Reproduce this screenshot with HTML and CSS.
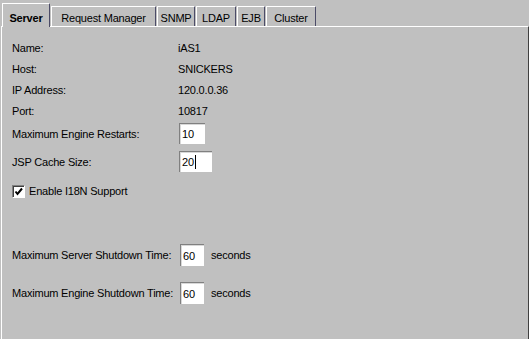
FILE: index.html
```html
<!DOCTYPE html>
<html lang="en">
<head>
    <meta charset="UTF-8">
    <title>Server Properties</title>
    <link rel="stylesheet" href="styles.css">
</head>
<body>
    <div class="frame">
        <div class="tab-strip">
            <div class="tab selected">Server</div>
            <div class="tab">Request Manager</div>
            <div class="tab">SNMP</div>
            <div class="tab">LDAP</div>
            <div class="tab">EJB</div>
            <div class="tab">Cluster</div>
        </div>

        <div class="tab-panel">
            <div class="info-grid">
                <div class="label">Name:</div>
                <div class="value">iAS1</div>
                <div class="label">Host:</div>
                <div class="value">SNICKERS</div>
                <div class="label">IP Address:</div>
                <div class="value">120.0.0.36</div>
                <div class="label">Port:</div>
                <div class="value">10817</div>
            </div>

            <div class="engine-grid">
                <div class="label">Maximum Engine Restarts:</div>
                <div class="field field-restarts">10</div>
                <div class="label">JSP Cache Size:</div>
                <div class="field field-cache">20<span class="caret"></span></div>
            </div>

            <div class="check-row">
                <span class="checkbox">
                    <svg width="9" height="9" viewBox="0 0 9 9">
                        <path d="M1.5 4.5 L3.5 7 L8 1.5" fill="none" stroke="#000" stroke-width="2"/>
                    </svg>
                </span>
                <span class="label">Enable I18N Support</span>
            </div>

            <div class="shutdown-grid">
                <div class="label">Maximum Server Shutdown Time:</div>
                <div class="field field-time">60</div>
                <div class="unit">seconds</div>
                <div class="label">Maximum Engine Shutdown Time:</div>
                <div class="field field-time">60</div>
                <div class="unit">seconds</div>
            </div>
        </div>
    </div>
</body>
</html>
```

FILE: styles.css
```css
/* Base */
* {
    margin: 0;
    padding: 0;
    box-sizing: border-box;
}

body {
    font-family: 'Liberation Sans', Arial, sans-serif;
    font-size: 11px;
    letter-spacing: -0.2px;
    color: #000;
    background: #c0c0c0;
    height: 100vh;
    overflow: hidden;
}

.frame {
    display: flex;
    flex-direction: column;
    height: 100%;
    padding-left: 1px;
}

/* Tabs */
.tab-strip {
    display: flex;
    align-items: flex-end;
    gap: 1px;
    height: 26px;
    padding-left: 1px;
}

.tab {
    line-height: 14px;
    text-align: center;
    white-space: nowrap;
    padding: 4px 0 1px 0;
    border-top: 1px solid #fff;
    border-left: 1px solid #fff;
    border-right: 1px solid #4c4c68;
    border-radius: 1px 1px 0 0;
}

/* tab widths follow the label lengths */
.tab:nth-child(1) { width: 48px; }
.tab:nth-child(2) { width: 105px; }
.tab:nth-child(3) { width: 38px; }
.tab:nth-child(4) { width: 40px; }
.tab:nth-child(5) { width: 28px; }
.tab:nth-child(6) { width: 50px; }

.tab.selected {
    position: relative;
    font-weight: 700;
    padding: 7px 0 2px 0;
    margin-bottom: -1px;
    background: #c0c0c0;
}

/* Panel */
.tab-panel {
    flex-grow: 1;
    border-top: 1px solid #fff;
    border-left: 1px solid #fff;
    border-right: 1px solid #404040;
    padding: 10px 0 0 10px;
}

.label,
.value,
.unit {
    line-height: 14px;
    white-space: nowrap;
}

.info-grid {
    display: grid;
    grid-template-columns: 166px auto;
    grid-auto-rows: 21px;
    align-items: center;
}

.engine-grid {
    display: grid;
    grid-template-columns: 167px auto;
    row-gap: 7px;
    align-items: center;
    justify-items: start;
    margin-top: 2px;
}

/* Text fields */
.field {
    display: flex;
    align-items: center;
    height: 21px;
    padding-left: 2px;
    color: #000;
    background: #fff;
    border-top: 1px solid #808080;
    border-left: 1px solid #808080;
    box-shadow: inset 1px 1px 0 #d8d8d8;
    line-height: 14px;
}

.field-restarts { width: 26px; }
.field-cache { width: 33px; }
.field-time { width: 24px; height: 22px; }

.caret {
    width: 1px;
    height: 14px;
    margin-left: 1px;
    background: #000;
}

/* Checkbox */
.check-row {
    display: flex;
    align-items: center;
    gap: 4px;
    margin-top: 12px;
}

.checkbox {
    display: flex;
    align-items: center;
    justify-content: center;
    width: 13px;
    height: 13px;
    background: #fff;
    border-top: 1px solid #808080;
    border-left: 1px solid #808080;
    border-right: 1px solid #fff;
    border-bottom: 1px solid #fff;
    box-shadow: inset 1px 1px 0 #404040;
}

/* Shutdown times */
.shutdown-grid {
    display: grid;
    grid-template-columns: 160px 24px auto;
    column-gap: 8px;
    row-gap: 16px;
    align-items: center;
    margin-top: 46px;
}

.unit {
    margin-left: -1px;
}
```
